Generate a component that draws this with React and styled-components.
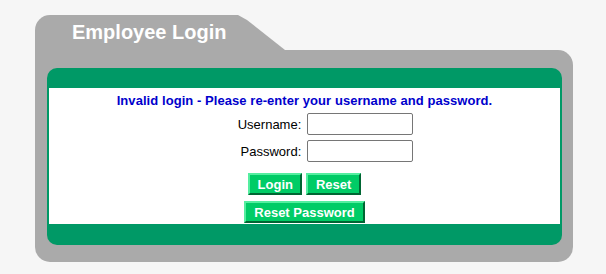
import React from 'react';
import styled, { createGlobalStyle } from 'styled-components';

const GlobalStyle = createGlobalStyle`
  body {
    margin: 0;
    background-color: #f6f6f6;
    font-family: "Liberation Sans", Arial, sans-serif;
  }
`;

const StyledPage = styled.div`
  width: 606px;
  height: 274px;
  padding: 15px 0 0 35px;
  box-sizing: border-box;
`;

const StyledWrapper = styled.div`
  width: 538px;
`;

const StyledTab = styled.div`
  width: 250px;
  height: 35px;
  background-color: #aaaaaa;
  border-top-left-radius: 15px;
  clip-path: polygon(0 0, 203px 0, 212px 5px, 250px 100%, 0 100%);
`;

const StyledTitle = styled.h1`
  margin: 0;
  padding-left: 37px;
  color: #fff;
  font-size: 20px;
  font-weight: bold;
  line-height: 35px;
`;

const StyledPanel = styled.div`
  background-color: #aaaaaa;
  border-radius: 0 15px 15px 15px;
  padding: 18px 11px 17px 12px;
`;

const StyledFrame = styled.div`
  background-color: #009966;
  border-radius: 10px;
  padding: 20px 2px 21px;
`;

const StyledBody = styled.form`
  background-color: #fff;
  height: 136px;
  display: flex;
  flex-direction: column;
  align-items: center;
`;

const StyledMessage = styled.p`
  margin: 5px 0 0;
  color: #0000cc;
  font-size: 13px;
  font-weight: bold;
  line-height: 15px;
  letter-spacing: 0.06px;
`;

const StyledFields = styled.div`
  display: grid;
  grid-template-columns: auto auto;
  column-gap: 6px;
  row-gap: 5px;
  align-items: center;
  margin: 5px 0 0 42px;
`;

const StyledLabel = styled.label`
  font-size: 13px;
  color: #000;
  text-align: right;
`;

const StyledInput = styled.input`
  width: 106px;
  height: 22px;
  box-sizing: border-box;
  border: 1px solid #767676;
  border-radius: 2px;
  padding: 1px 3px;
  font-size: 13px;
`;

const StyledButtonRow = styled.div`
  display: flex;
  gap: 4px;
  margin-top: ${({ $top }) => $top}px;
`;

const StyledButton = styled.button`
  height: 22px;
  padding: 0 ${({ $pad }) => $pad}px;
  background-color: #00cc66;
  color: #fff;
  font-family: "Liberation Sans", Arial, sans-serif;
  font-size: 13px;
  font-weight: bold;
  border: 2px solid;
  border-color: #55eea0 #006633 #006633 #55eea0;
  cursor: pointer;
`;

const App = () => {
  return (
    <StyledPage>
      <GlobalStyle />
      <StyledWrapper>
        <StyledTab>
          <StyledTitle>Employee Login</StyledTitle>
        </StyledTab>
        <StyledPanel>
          <StyledFrame>
            <StyledBody onSubmit={(e) => e.preventDefault()}>
              <StyledMessage>Invalid login - Please re-enter your username and password.</StyledMessage>
              <StyledFields>
                <StyledLabel htmlFor="username">Username:</StyledLabel>
                <StyledInput id="username" type="text" />
                <StyledLabel htmlFor="password">Password:</StyledLabel>
                <StyledInput id="password" type="password" />
              </StyledFields>
              <StyledButtonRow $top={11}>
                <StyledButton type="submit" $pad={7.5}>Login</StyledButton>
                <StyledButton type="reset" $pad={7.5}>Reset</StyledButton>
              </StyledButtonRow>
              <StyledButtonRow $top={6}>
                <StyledButton type="button" $pad={8.5}>Reset Password</StyledButton>
              </StyledButtonRow>
            </StyledBody>
          </StyledFrame>
        </StyledPanel>
      </StyledWrapper>
    </StyledPage>
  );
};

export default App;
